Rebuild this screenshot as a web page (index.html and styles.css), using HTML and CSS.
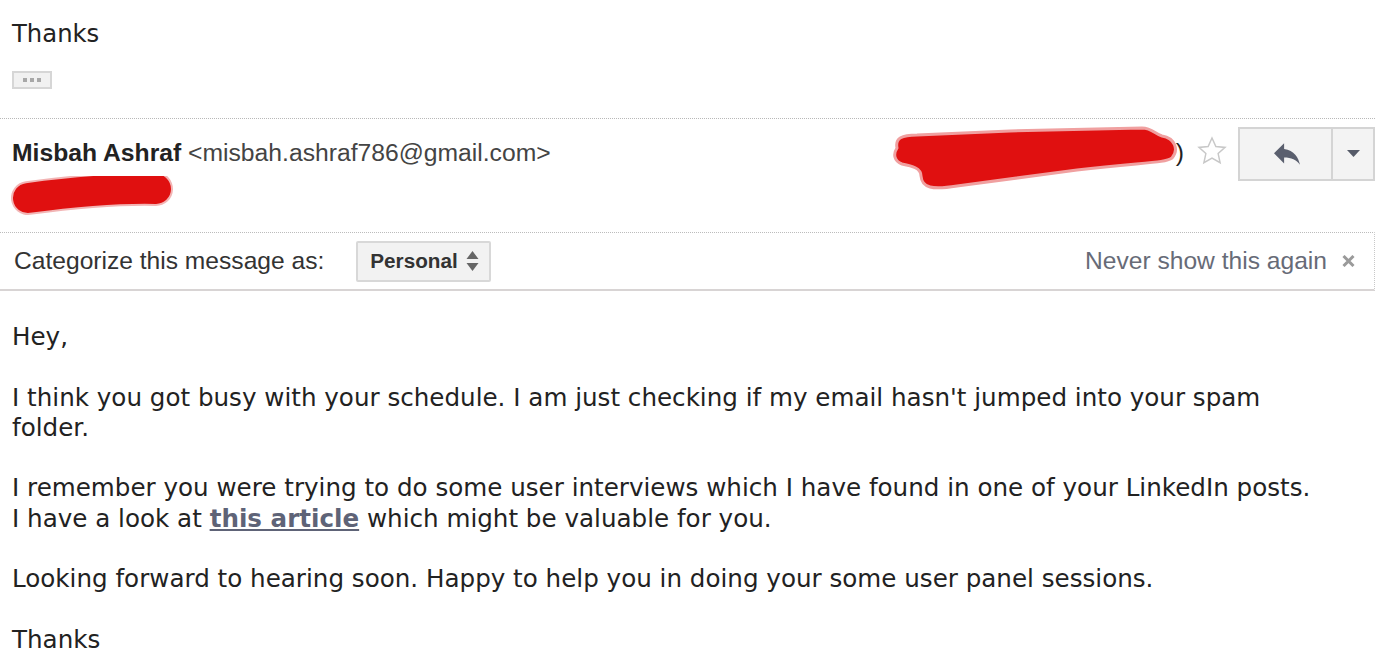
FILE: index.html
```html
<!DOCTYPE html>
<html>
<head>
<meta charset="utf-8">
<link rel="stylesheet" href="styles.css">
</head>
<body>
<div class="page">
  <div class="prev">
    <div class="prev-text">Thanks</div>
    <div class="ellipsis"><span></span><span></span><span></span></div>
  </div>
  <div class="divider"></div>
  <div class="header">
    <div class="from">
      <div class="from-line"><span class="name">Misbah Ashraf</span> <span class="email">&lt;misbah.ashraf786@gmail.com&gt;</span></div>
      <svg class="redact-left" width="180" height="40" viewBox="0 0 180 40">
        <path d="M22 22 C 60 17, 110 12, 150 13" stroke="#f2b5b5" stroke-width="34" stroke-linecap="round" fill="none"/>
        <path d="M22 22 C 60 17, 110 12, 150 13" stroke="#e01010" stroke-width="30" stroke-linecap="round" fill="none"/>
      </svg>
    </div>
    <div class="meta">
      <div class="date">
        <svg class="redact-right" width="292" height="68" viewBox="893 126 292 68">
          <path d="M900 150 C 898 140, 905 137, 920 137 L 1013 133 L 1145 130 C 1155 130, 1158 136, 1165 138 C 1178 140, 1182 152, 1175 160 C 1168 165, 1150 164, 1080 172 L 960 188 C 935 192, 925 190, 924 178 C 924 170, 915 168, 905 166 C 897 163, 896 156, 900 150 Z" fill="#e01010" stroke="#f0a0a0" stroke-width="3"/>
        </svg>
        <span class="paren">)</span>
      </div>
      <svg class="star" width="32" height="32" viewBox="0 0 24 24">
        <path d="M12 2.2 L14.9 8.6 L21.8 9.3 L16.6 13.9 L18.1 20.8 L12 17.3 L5.9 20.8 L7.4 13.9 L2.2 9.3 L9.1 8.6 Z" fill="none" stroke="#c8c8c8" stroke-width="1.1" stroke-linejoin="miter"/>
      </svg>
      <div class="reply-group">
        <div class="reply-btn">
          <svg width="26" height="22" viewBox="3 5 18 15"><path d="M10 9V5l-7 7 7 7v-4.1c5 0 8.5 1.6 11 5.1-1-5-4-10-11-11z" fill="#5a5f6e"/></svg>
        </div>
        <div class="more-btn">
          <svg width="13" height="7" viewBox="0 0 13 7"><path d="M0 0 H13 L6.5 7 Z" fill="#555a68"/></svg>
        </div>
      </div>
    </div>
  </div>
  <div class="catbar">
    <div class="cat-left">
      <span class="cat-label">Categorize this message as:</span>
      <div class="select">
        <span>Personal</span>
        <svg width="13" height="22" viewBox="0 0 13 22"><path d="M6.5 1 L12.5 9 H0.5 Z M6.5 21 L12.5 13 H0.5 Z" fill="#666"/></svg>
      </div>
    </div>
    <div class="cat-right">
      <span class="never">Never show this again</span>
      <svg class="close" width="13" height="12" viewBox="0 0 13 12"><path d="M1.5 1 L11.5 11 M11.5 1 L1.5 11" stroke="#9a9a9a" stroke-width="3"/></svg>
    </div>
  </div>
  <div class="body">
    <p>Hey,</p>
    <p>I think you got busy with your schedule. I am just checking if my email hasn't jumped into your spam folder.</p>
    <p>I remember you were trying to do some user interviews which I have found in one of your LinkedIn posts.<br>I have a look at <a href="#">this article</a> which might be valuable for you.</p>
    <p>Looking forward to hearing soon. Happy to help you in doing your some user panel sessions.</p>
    <p>Thanks</p>
  </div>
</div>
</body>
</html>
```

FILE: styles.css
```css
html, body {
  margin: 0;
  padding: 0;
  background: #fff;
}
.page {
  width: 1375px;
  color: #222;
}
.prev {
  padding: 19px 0 0 12px;
  font-family: "DejaVu Sans", Verdana, sans-serif;
  font-size: 24.3px;
  line-height: 30px;
}
.ellipsis {
  margin-top: 22px;
  width: 36px;
  height: 14px;
  border: 2px solid #d6d6d6;
  background: #f1f1f1;
  display: flex;
  align-items: center;
  justify-content: center;
  gap: 3px;
}
.ellipsis span {
  width: 4px;
  height: 4px;
  background: #a8a8a8;
}
.divider {
  margin-top: 29px;
  border-top: 1px dotted #b8b8b8;
}
.header {
  display: flex;
  justify-content: space-between;
  align-items: flex-start;
  height: 113px;
  font-family: "Liberation Sans", Arial, sans-serif;
  font-size: 24.7px;
}
.from {
  padding: 19px 0 0 12px;
}
.from-line {
  line-height: 30px;
}
.name {
  font-weight: bold;
  color: #222;
}
.email {
  color: #444;
}
.redact-left {
  display: block;
  margin: 8px 0 0 -6px;
}
.meta {
  display: flex;
  align-items: flex-start;
  padding-top: 8px;
}
.date {
  display: flex;
  align-items: flex-start;
  margin-top: -3px;
}
.redact-right {
  display: block;
}
.paren {
  margin: 14px 0 0 -6px;
  line-height: 30px;
  color: #222;
}
.star {
  margin: 8px 0 0 12px;
}
.reply-group {
  display: flex;
  margin-left: 10px;
  height: 50px;
  border: 2px solid #d4d4d4;
  background: #f3f3f3;
}
.reply-btn {
  width: 91px;
  display: flex;
  align-items: center;
  justify-content: center;
  border-right: 2px solid #d4d4d4;
}
.reply-btn svg {
  margin-left: 2px;
}
.more-btn {
  width: 40px;
  display: flex;
  align-items: center;
  justify-content: center;
}
.more-btn svg {
  margin-bottom: 2px;
}
.catbar {
  display: flex;
  justify-content: space-between;
  align-items: center;
  height: 56px;
  border-top: 1px dotted #bcbcbc;
  border-right: 1px dotted #c8c8c8;
  border-bottom: 2px solid #d8d4d4;
  font-family: "Liberation Sans", Arial, sans-serif;
  font-size: 24.6px;
}
.cat-left {
  display: flex;
  align-items: center;
  padding-left: 14px;
}
.cat-label {
  color: #333;
}
.select {
  margin-left: 32px;
  height: 37px;
  box-sizing: content-box;
  border: 2px solid #d8d8d8;
  border-radius: 2px;
  background: #f2f2f2;
  display: flex;
  align-items: center;
  justify-content: space-between;
  padding: 0 10px 0 0;
  width: 121px;
}
.select span {
  padding-left: 12px;
  font-weight: bold;
  font-size: 20.7px;
  color: #333;
}
.cat-right {
  display: flex;
  align-items: center;
  padding-right: 19px;
}
.never {
  color: #676b77;
}
.close {
  margin-left: 15px;
}
.body {
  padding: 31px 40px 0 12px;
  font-family: "DejaVu Sans", Verdana, sans-serif;
  font-size: 24.6px;
  line-height: 30.3px;
  color: #222;
}
.body p {
  margin: 0 0 30.3px 0;
}
.body a {
  color: #5e6377;
  font-weight: bold;
  text-decoration: underline;
}
```
